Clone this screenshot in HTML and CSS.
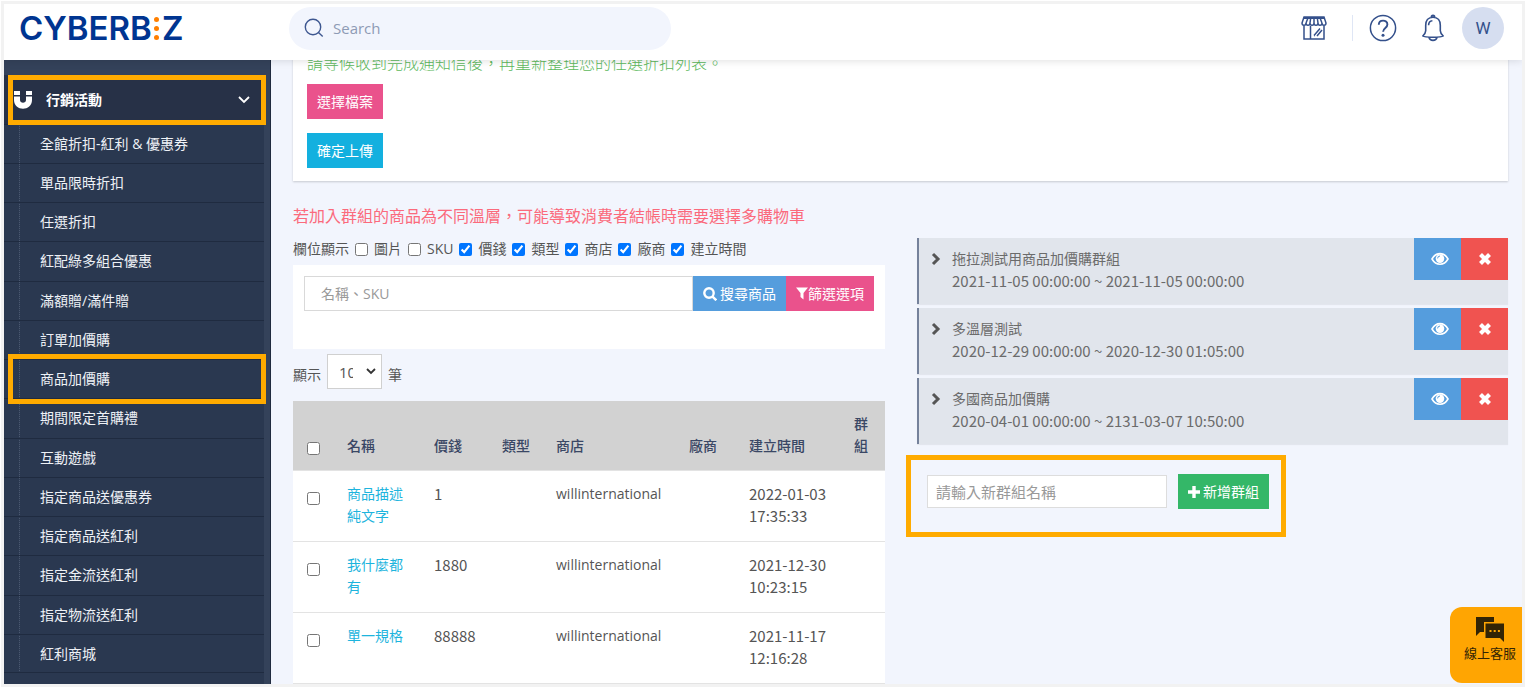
FILE: index.html
```html
<!DOCTYPE html>
<html lang="zh-Hant">
<head>
<meta charset="utf-8">
<title>CYBERBIZ 商品加價購</title>
<link rel="stylesheet" href="styles.css">
</head>
<body>
<svg class="defs" aria-hidden="true">
  <symbol id="eye" viewBox="0 0 18 14"><path d="M1 7C5 -.2 13 -.2 17 7 13 14 5 14 1 7z" fill="none" stroke="currentColor" stroke-width="1.6"/><circle cx="9" cy="6.6" r="4.3" fill="currentColor"/><path d="M6.6 6.4A2.5 2.5 0 0 1 9 4" fill="none" stroke="#559ddd" stroke-width="1"/></symbol>
  <symbol id="cross" viewBox="0 0 14 14"><path d="M2.5 2.5l9 9m0-9l-9 9" stroke="currentColor" stroke-width="4.2"/></symbol>
  <symbol id="chevron" viewBox="0 0 10 14"><path d="M2 2l5 5-5 5" fill="none" stroke="currentColor" stroke-width="3"/></symbol>
</svg>
<div class="app">
  <header class="topbar">
    <a class="logo" href="#" aria-label="CYBERBIZ">CYBERB<span class="logo-dots"><i></i><i></i><i></i></span>Z</a>
    <label class="search">
      <svg width="20" height="20" viewBox="0 0 20 20" fill="none" stroke="#3e5790" stroke-width="1.4"><circle cx="9" cy="9" r="7.7"/><path d="M14.5 14.5l4.2 4"/></svg>
      <input type="search" placeholder="Search" aria-label="Search">
    </label>
    <div class="tools">
      <button class="tool" type="button" aria-label="商店">
        <svg width="28" height="26" viewBox="0 0 28 26" fill="none" stroke="#34508b" stroke-width="1.5"><path d="M4 2h20l2 6c0 3-4 3-4 0 0 3-4 3-4 0 0 3-4 3-4 0 0 3-4 3-4 0 0 3-4 3-4 0 0 3-4 3-4 0zM3 3.200h22M8 3L6 8m4.700-5L10 8m4-5v5m3.300-5L18 8m2-5l2 5M4 10.500V24h20V10.500M10.500 11v13M14 20.500l6-7M17 21l5-6M14 20.500h1"/></svg>
      </button>
      <span class="divider"></span>
      <button class="tool" type="button" aria-label="說明">
        <svg width="28" height="28" viewBox="0 0 28 28" fill="none" stroke="#34508b" stroke-width="1.500"><circle cx="14" cy="14" r="12.600"/><path d="M9.800 10.800c0-5.600 8.600-5.400 8.600-.3 0 3.600-4.300 3.300-4.300 7.300" stroke-width="1.900"/><circle cx="14" cy="21.200" r="1.500" fill="#34508b" stroke="none"/></svg>
      </button>
      <button class="tool tool-bell" type="button" aria-label="通知">
        <svg width="24" height="28" viewBox="0 0 24 28" fill="none" stroke="#34508b" stroke-width="1.600" stroke-linejoin="round"><path d="M12 3.300c-5 0-7.300 3.500-7.300 8v5.500c0 2-1 3.300-2.900 5.200 2 1.600 18.400 1.600 20.400 0-1.900-1.900-2.900-3.200-2.900-5.200v-5.500c0-4.500-2.300-8-7.300-8zM10.300 3.300c0-2.600 3.400-2.600 3.400 0M7.600 11.300c0-2.800 1.400-4.400 3.800-4.600M8 23.500c1 3.800 7 3.800 8 0"/></svg>
      </button>
      <button class="avatar" type="button">W</button>
    </div>
  </header>

  <div class="body">
    <nav class="sidebar">
      <div class="menu">
        <button class="menu-head marked" type="button">
          <svg width="18" height="18" viewBox="0 0 18 18"><path d="M0 5.500h6V9c0 3.600 6 3.600 6 0V5.500h6V9c0 11.600-18 11.600-18 0z" fill="#fff"/><path d="M0 0h6v4H0zM12 0h6v4h-6z" fill="#fff"/></svg>
          <span>行銷活動</span>
          <svg class="caret" width="12" height="8" viewBox="0 0 12 8" fill="none" stroke="#fff" stroke-width="1.800"><path d="M1 1l5 5 5-5"/></svg>
        </button>
        <ul class="menu-list">
          <li><a href="#">全館折扣-紅利 &amp; 優惠券</a></li>
          <li><a href="#">單品限時折扣</a></li>
          <li><a href="#">任選折扣</a></li>
          <li><a href="#">紅配綠多組合優惠</a></li>
          <li><a href="#">滿額贈/滿件贈</a></li>
          <li><a href="#">訂單加價購</a></li>
          <li><a class="marked" href="#" aria-current="page">商品加價購</a></li>
          <li><a href="#">期間限定首購禮</a></li>
          <li><a href="#">互動遊戲</a></li>
          <li><a href="#">指定商品送優惠券</a></li>
          <li><a href="#">指定商品送紅利</a></li>
          <li><a href="#">指定金流送紅利</a></li>
          <li><a href="#">指定物流送紅利</a></li>
          <li><a href="#">紅利商城</a></li>
        </ul>
      </div>
    </nav>

    <main class="main">
      <section class="card upload">
        <p class="hint">請等候收到完成通知信後，再重新整理您的任選折扣列表。</p>
        <button class="btn btn-pink" type="button">選擇檔案</button>
        <button class="btn btn-cyan" type="button">確定上傳</button>
      </section>

      <p class="warning">若加入群組的商品為不同溫層，可能導致消費者結帳時需要選擇多購物車</p>

      <div class="columns">
        <section class="products">
          <div class="fields">
            <span>欄位顯示</span>
            <label><input type="checkbox">圖片</label>
            <label><input type="checkbox">SKU</label>
            <label><input type="checkbox" checked>價錢</label>
            <label><input type="checkbox" checked>類型</label>
            <label><input type="checkbox" checked>商店</label>
            <label><input type="checkbox" checked>廠商</label>
            <label><input type="checkbox" checked>建立時間</label>
          </div>
          <form class="finder">
            <input type="text" placeholder="名稱、SKU" aria-label="名稱、SKU">
            <button class="btn btn-blue" type="button"><svg width="14" height="14" viewBox="0 0 14 14" fill="none" stroke="#fff" stroke-width="2.400"><circle cx="6" cy="6" r="4.700"/><path d="M9.300 9.300l4 4"/></svg>搜尋商品</button>
            <button class="btn btn-pink btn-filter" type="button"><svg width="12" height="13" viewBox="0 0 12 13"><path d="M0 .5h12L7.500 6v6.500L4.500 10V6z" fill="#fff"/></svg>篩選選項</button>
          </form>
          <div class="pager">
            <label for="size">顯示</label>
            <span class="select"><select id="size"><option>10</option><option>25</option><option>50</option></select><svg width="10" height="7" viewBox="0 0 10 7" fill="none" stroke="#333" stroke-width="1.800"><path d="M1 1l4 4 4-4"/></svg></span>
            <span class="unit">筆</span>
          </div>
          <table class="grid">
            <colgroup><col class="c-check"><col class="c-name"><col class="c-price"><col class="c-type"><col class="c-shop"><col class="c-vendor"><col class="c-time"><col class="c-group"></colgroup>
            <thead>
              <tr><th><input type="checkbox" aria-label="全選"></th><th>名稱</th><th>價錢</th><th class="tight">類型</th><th>商店</th><th>廠商</th><th>建立時間</th><th>群組</th></tr>
            </thead>
            <tbody>
              <tr><td><input type="checkbox" aria-label="選取"></td><td><a href="#">商品描述純文字</a></td><td class="num">1</td><td></td><td>willinternational</td><td></td><td class="num">2022-01-03 17:35:33</td><td></td></tr>
              <tr><td><input type="checkbox" aria-label="選取"></td><td><a href="#">我什麼都有</a></td><td class="num">1880</td><td></td><td>willinternational</td><td></td><td class="num">2021-12-30 10:23:15</td><td></td></tr>
              <tr><td><input type="checkbox" aria-label="選取"></td><td><a href="#">單一規格</a></td><td class="num">88888</td><td></td><td>willinternational</td><td></td><td class="num">2021-11-17 12:16:28</td><td></td></tr>
            </tbody>
          </table>
        </section>

        <section class="groups">
          <article class="group">
            <svg class="arrow" width="10" height="14"><use href="#chevron"/></svg>
            <div class="group-text"><div>拖拉測試用商品加價購群組</div><div class="num">2021-11-05 00:00:00 ~ 2021-11-05 00:00:00</div></div>
            <button class="act act-view" type="button" aria-label="檢視"><svg width="20" height="14"><use href="#eye"/></svg></button>
            <button class="act act-del" type="button" aria-label="刪除"><svg width="14" height="14"><use href="#cross"/></svg></button>
          </article>
          <article class="group">
            <svg class="arrow" width="10" height="14"><use href="#chevron"/></svg>
            <div class="group-text"><div>多溫層測試</div><div class="num">2020-12-29 00:00:00 ~ 2020-12-30 01:05:00</div></div>
            <button class="act act-view" type="button" aria-label="檢視"><svg width="20" height="14"><use href="#eye"/></svg></button>
            <button class="act act-del" type="button" aria-label="刪除"><svg width="14" height="14"><use href="#cross"/></svg></button>
          </article>
          <article class="group">
            <svg class="arrow" width="10" height="14"><use href="#chevron"/></svg>
            <div class="group-text"><div>多國商品加價購</div><div class="num">2020-04-01 00:00:00 ~ 2131-03-07 10:50:00</div></div>
            <button class="act act-view" type="button" aria-label="檢視"><svg width="20" height="14"><use href="#eye"/></svg></button>
            <button class="act act-del" type="button" aria-label="刪除"><svg width="14" height="14"><use href="#cross"/></svg></button>
          </article>
          <form class="new-group">
            <input type="text" placeholder="請輸入新群組名稱" aria-label="請輸入新群組名稱">
            <button class="btn btn-green" type="button"><svg width="12" height="12" viewBox="0 0 12 12"><path d="M4.300 0h3.400v4.300H12v3.400H7.700V12H4.300V7.700H0V4.300h4.300z" fill="#fff"/></svg>新增群組</button>
          </form>
        </section>
      </div>
    </main>
  </div>
</div>
<button class="chat" type="button">
  <svg width="28" height="26" viewBox="0 0 28 26"><path d="M0 1h18v5H8v10H4l-4 4z" fill="#332405"/><path d="M9.500 7.500H28V26l-4-4H9.500z" fill="#332405"/><path d="M13.500 14h2v2h-2zM17.700 14h2v2h-2zM21.900 14h2v2h-2z" fill="#ffa502"/></svg>
  <span>線上客服</span>
</button>
</body>
</html>
```
FILE: styles.css
```css
* { box-sizing: border-box; }

body {
  margin: 0;
  padding: 1px;
  height: 100vh;
  background: #fff;
  color: #555;
  font: 14px/22px "Open Sans", "Noto Sans CJK TC", sans-serif;
}

button, input, select { margin: 0; font: inherit; color: inherit; }
button { border: 0; padding: 0; cursor: pointer; background: none; }
p { margin: 0; }
a { color: inherit; text-decoration: none; }
.defs { display: none; }
.num { font-family: "Noto Sans CJK TC", sans-serif; font-size: 15px; }

.app {
  height: 100%;
  border: 3px solid #f2f2f2;
  display: flex;
  flex-direction: column;
  overflow: hidden;
}

/* Top bar */
.topbar {
  flex: none;
  display: flex;
  align-items: center;
  height: 56px;
  padding: 0 18px 8px 15px;
  background: #fff;
  box-shadow: 0 1px 8px rgba(0, 0, 0, .12);
  z-index: 2;
}
.logo {
  display: flex;
  align-items: center;
  width: 270px;
  color: #003591;
  font: 600 33px/40px Inter, sans-serif;
}
.logo-dots { display: flex; flex-direction: column; gap: 4px; margin: 0 3px 0 2px; }
.logo-dots i { width: 5px; height: 5px; border-radius: 50%; background: #ff7f00; }
.search {
  display: flex;
  align-items: center;
  gap: 7px;
  width: 382px;
  height: 43px;
  padding: 0 15px;
  border-radius: 22px;
  background: #f2f5fd;
}
.search input { flex: 1; border: 0; outline: 0; background: none; font-size: 15px; }
.search input::placeholder { color: #8e9bb5; opacity: 1; }
.tools { margin-left: auto; display: flex; align-items: center; }
.tool { display: flex; }
.divider { width: 1px; height: 26px; margin: 0 16px 0 24px; background: #dfe6f5; }
.tool-bell { margin: 0 17px 0 24px; }
.avatar {
  width: 42px;
  height: 42px;
  border-radius: 50%;
  background: #d6def0;
  color: #34508b;
  font: 17px/42px Roboto, sans-serif;
}

/* Sidebar */
.body { flex: 1; display: flex; min-height: 0; }
.sidebar {
  flex: none;
  width: 267px;
  padding: 15px 6px 0 0;
  background: #34425a;
  border-right: 1px solid #202b3f;
  overflow: hidden;
}
.menu { height: 100%; background: #2a3850; color: #fff; }
.menu-head {
  display: flex;
  align-items: center;
  gap: 14px;
  width: 100%;
  height: 49px;
  padding: 0 14px 0 10px;
  background: #273147;
  font-weight: 700;
}
.caret { margin-left: auto; }
.menu-list {
  margin: 0;
  padding: 0;
  list-style: none;
  background: repeating-linear-gradient(#4a5870 0 1px, #2f3d55 1px 2px) 15px 0 / 1px 100% no-repeat;
}
.menu-list li { height: 39px; border-top: 1px solid #1f2b40; }
.menu-list li:nth-child(4n) { height: 40px; }
.menu-list li:last-child { border-bottom: 1px solid #1f2b40; }
.menu-list a { display: block; padding: 8px 0 8px 36px; color: #eef1f6; }
.marked { position: relative; }
.marked::after {
  content: "";
  position: absolute;
  inset: 0 -2px -1px 4px;
  border: 5px solid #ffab00;
}
.menu-list .marked::after { inset: -6px -2px; left: 4px; }

/* Content */
.main { flex: 1; min-width: 0; padding: 0 14px 0 22px; background: #f2f5fd; overflow: hidden; }
.card { background: #fff; box-shadow: 0 1px 2px rgba(0, 0, 0, .18); }
.upload {
  display: flex;
  flex-direction: column;
  align-items: flex-start;
  margin-top: -8px;
  padding: 0 14px 13px;
}
.hint { margin-bottom: 10px; color: #5cb85c; font-size: 16px; font-weight: 300; }
.upload .btn + .btn { margin-top: 14px; }
.btn {
  display: inline-flex;
  align-items: center;
  justify-content: center;
  gap: 3px;
  height: 35px;
  padding: 0 10px;
  color: #fff;
  white-space: nowrap;
}
.btn-pink { background: #ea528c; }
.btn-cyan { background: #13b0df; }
.btn-blue { background: #559ddd; }
.btn-green { background: #34b768; }
.warning { margin: 24px 0 11px; color: #fb6a7c; font-size: 16px; }
.columns { display: grid; grid-template-columns: 1fr 1fr; gap: 32px; align-items: start; }

.fields { display: flex; gap: 6px; margin-bottom: 5px; }
.fields label { display: flex; align-items: center; gap: 6px; }
input[type="checkbox"] { width: 13px; height: 13px; }
.finder { display: flex; padding: 11px 11px 38px; background: #fff; }
.finder input {
  flex: 1;
  min-width: 0;
  padding: 0 16px;
  border: 1px solid #d9d9d9;
  outline: 0;
}
.finder input::placeholder, .new-group input::placeholder { color: #999; opacity: 1; }
.btn-filter { gap: 0; }

.pager { display: flex; align-items: flex-end; gap: 6px; margin: 5px 0 12px; }
.pager label, .unit { padding-bottom: 3px; }
.select { position: relative; display: flex; width: 55px; height: 35px; }
.select select {
  appearance: none;
  width: 100%;
  padding: 0 28px 0 11px;
  border: 1px solid #d0d0d0;
  border-radius: 0;
  background: #fff;
  font-size: 15px;
}
.select svg { position: absolute; right: 6px; top: 14px; pointer-events: none; }

.grid { width: 100%; table-layout: fixed; border-collapse: collapse; background: #fff; }
.c-check { width: 40px; }
.c-name { width: 87px; }
.c-price { width: 68px; }
.c-type { width: 54px; }
.c-shop { width: 133px; }
.c-vendor { width: 60px; }
.c-time { width: 105px; }
.c-group { width: 45px; }
.grid th, .grid td { padding: 12px 14px 14px; border-bottom: 1px solid #e3e3e3; text-align: left; }
.grid th { padding-bottom: 13px; background: #d2d2d2; color: #3a4765; font-weight: 500; vertical-align: bottom; }
.grid td { vertical-align: top; }
.grid td:first-child, .grid th:first-child, .grid .tight { padding-right: 0; }
.grid input { display: block; margin: 9px 0 0; }
.grid th input { margin: 0 0 2px; }
.grid a { color: #1db4dd; }

.groups { display: flex; flex-direction: column; gap: 4px; }
.group {
  display: flex;
  align-items: flex-start;
  border-left: 2px solid #75819b;
  background: #e1e5ec;
  box-shadow: 0 1px 1px rgba(0, 0, 0, .06);
}
.arrow { flex: none; margin: 14px 11px 0 12px; color: #555; }
.group-text { flex: 1; padding: 10px 0 12px; color: #6b6b6b; }
.act { display: flex; align-items: center; justify-content: center; width: 47px; height: 42px; color: #fff; }
.act-view { background: #559ddd; padding-left: 4px; }
.act-del { background: #f05350; }
.new-group {
  display: flex;
  align-items: center;
  align-self: flex-start;
  gap: 11px;
  margin: 7px 0 0 -11px;
  padding: 14px 12px 23px 16px;
  border: 5px solid #ffab00;
}
.new-group input { width: 240px; height: 33px; padding: 0 8px; border: 1px solid #ddd; outline: 0; font-size: 15px; }

/* Chat launcher floats over the page corner */
.chat {
  position: fixed;
  right: 4px;
  bottom: 5px;
  display: flex;
  flex-direction: column;
  align-items: center;
  width: 72px;
  height: 76px;
  padding: 9px 0 0 8px;
  border-radius: 12px 0 0 12px;
  background: #ffa502;
  color: #332405;
  font-size: 13px;
  z-index: 3;
}
```
